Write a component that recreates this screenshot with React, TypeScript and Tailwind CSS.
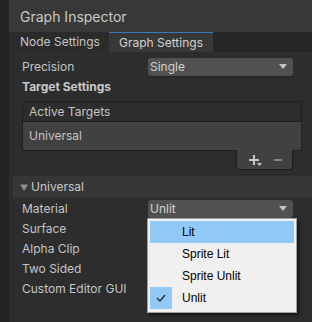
import React from "react";

const font = { fontFamily: "Inter, 'Noto Sans', sans-serif" };

function Dropdown({ value }: { value: string }) {
  return (
    <div className="w-[145px] h-[18px] bg-[#515151] rounded-[3px] flex items-center justify-between pl-[2px] pr-[6px] text-[12px] text-[#d2d2d2] shadow-[0_1px_0_#242424]">
      <span>{value}</span>
      <svg width="8" height="6" viewBox="0 0 8 6"><path d="M0 0h8L4 5z" fill="#c4c4c4" /></svg>
    </div>
  );
}

export default function App() {
  return (
    <div className="w-[312px] h-[322px] flex bg-[#232323] overflow-hidden text-[#c4c4c4]" style={font}>
      <div className="w-[9px] shrink-0" />
      <div className="flex-1 flex flex-col relative">
        <div className="h-[32px] bg-[#383838] flex items-center pl-[11px] text-[14px] text-[#c8c8c8]">Graph Inspector</div>
        <div className="h-[20px] bg-[#262626] flex text-[12px]">
          <div className="w-[100px] bg-[#2b2b2b] flex items-center pl-[11px]">Node Settings</div>
          <div className="w-[104px] bg-[#383838] border-t border-[#3a79bb] flex items-center pl-[10px] text-[#d2d2d2]">Graph Settings</div>
        </div>
        <div className="flex-1 bg-[#2d2d2d] flex flex-col text-[12px]">
          <div className="h-[6px]" />
          <div className="h-[18px] flex items-center pl-[13px] pr-[19px]">
            <span className="flex-1">Precision</span>
            <Dropdown value="Single" />
          </div>
          <div className="h-[22px] flex items-center pl-[13px] font-bold text-[12px] text-[#c8c8c8]">Target Settings</div>
          <div className="h-[3px]" />
          <div className="ml-[13px] mr-[10px] border border-[#1f1f1f] rounded-[3px] overflow-hidden">
            <div className="h-[20px] bg-[#2d2d2d] border-b border-[#1f1f1f] flex items-center pl-[6px]">Active Targets</div>
            <div className="h-[28px] bg-[#414141] flex items-center pl-[6px]">Universal</div>
          </div>
          <div className="flex justify-end pr-[19px]">
            <div className="w-[57px] h-[20px] bg-[#414141] border border-t-0 border-[#1f1f1f] rounded-b-[3px] flex items-center justify-center gap-[14px] -mt-px">
              <div className="relative w-[12px] h-[12px]">
                <div className="absolute left-[5px] top-[1px] w-[2px] h-[10px] bg-[#c8c8c8]" />
                <div className="absolute left-[1px] top-[5px] w-[10px] h-[2px] bg-[#c8c8c8]" />
                <svg className="absolute left-[9px] top-[9px]" width="5" height="4" viewBox="0 0 5 4"><path d="M0 0h5L2.5 3z" fill="#c8c8c8" /></svg>
              </div>
              <div className="w-[8px] h-[2px] bg-[#8a8a8a]" />
            </div>
          </div>
          <div className="h-[6px]" />
          <div className="h-[22px] ml-[4px] bg-[#363636] flex items-center pl-[6px] text-[#c8c8c8]">
            <svg width="10" height="9" viewBox="0 0 10 9" className="mr-[2px]"><path d="M1 1.5h8L5 8z" fill="#8c8c8c" /></svg>
            Universal
          </div>
          <div className="h-[2px]" />
          <div className="h-[18px] flex items-center pl-[13px] pr-[19px]">
            <span className="flex-1">Material</span>
            <Dropdown value="Unlit" />
          </div>
          <div className="flex flex-col pl-[13px] pt-[1px]">
            <div className="h-[20px] flex items-center">Surface</div>
            <div className="h-[20px] flex items-center">Alpha Clip</div>
            <div className="h-[20px] flex items-center">Two Sided</div>
            <div className="h-[20px] flex items-center">Custom Editor GUI</div>
          </div>
        </div>
        <div
          className="absolute left-[138px] top-[218px] w-[150px] h-[95px] bg-[#f0f0f0] border border-[#a0a0a0] shadow-[2px_2px_3px_rgba(0,0,0,0.5)] p-[2px] flex flex-col text-[12px] text-[#000]"
          style={{ fontFamily: "'Liberation Sans', 'Noto Sans', sans-serif" }}
        >
          <div className="h-[22px] bg-[#91c9f7] flex items-center pl-[32px]">Lit</div>
          <div className="h-[22px] flex items-center pl-[32px]">Sprite Lit</div>
          <div className="h-[22px] flex items-center pl-[32px]">Sprite Unlit</div>
          <div className="h-[22px] flex items-center">
            <div className="w-[22px] h-[22px] bg-[#91c9f7] flex items-center justify-center mr-[10px]">
              <svg width="10" height="8" viewBox="0 0 10 8"><path d="M1 4l3 3 5-6" stroke="#333" strokeWidth="1.5" fill="none" /></svg>
            </div>
            Unlit
          </div>
        </div>
      </div>
    </div>
  );
}
